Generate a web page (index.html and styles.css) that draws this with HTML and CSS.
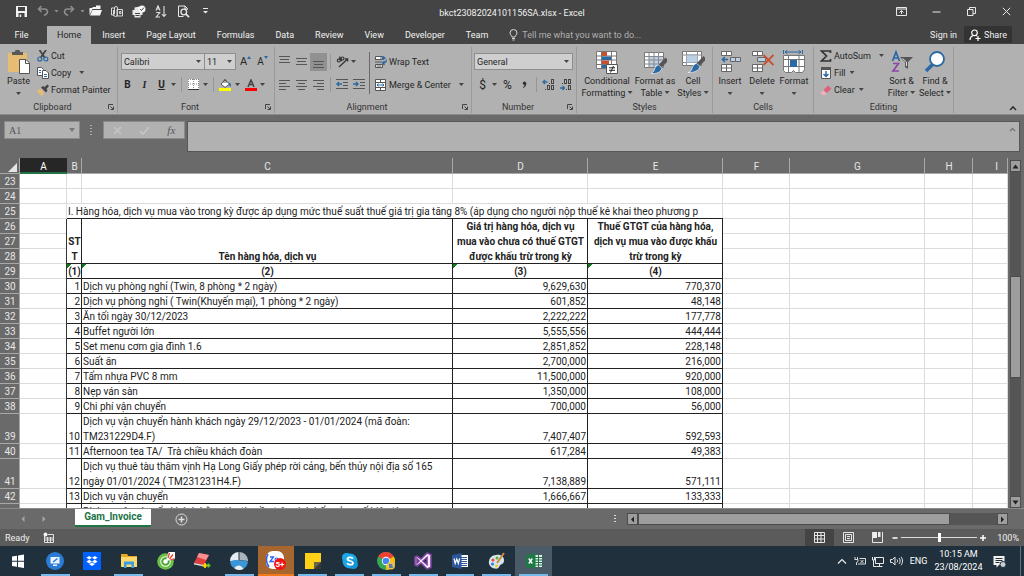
FILE: index.html
```html
<!DOCTYPE html>
<html lang="vi">
<head>
<meta charset="utf-8">
<title>bkct23082024101156SA.xlsx - Excel</title>
<link rel="stylesheet" href="styles.css">
</head>
<body>
<div class="app">

<header class="titlebar">
  <div class="quick">
    <button class="q q-save" aria-label="Save"><svg width="13" height="13" viewBox="0 0 13 13"><path fill="#f2f2f2" fill-rule="evenodd" d="M1 1h11v11H1zM3 2v4h7V2zM3.500 8v4h1.200V9.500h1.500V12h3.300V8z"/></svg></button>
    <button class="q" aria-label="Undo"><svg width="12" height="12" viewBox="0 0 12 12" fill="none" stroke="#8c8c8c" stroke-width="1.600"><path d="M4.500 1L1.500 4l3 3M1.500 4H7.500c2 0 3 1.200 3 2.800S9.500 9.500 7 10.500"/></svg></button>
    <span class="caret dim"></span>
    <button class="q" aria-label="Redo"><svg width="12" height="12" viewBox="0 0 12 12" fill="none" stroke="#8c8c8c" stroke-width="1.600"><path d="M7.500 1l3 3-3 3M10.500 4H4.500c-2 0-3 1.200-3 2.800S2.500 9.500 5 10.500"/></svg></button>
    <span class="caret dim"></span>
    <button class="q" aria-label="Open"><svg width="13" height="12" viewBox="0 0 13 12"><path fill="#f5f5f5" d="M0.500 10V3H3l1-1h3V0.500h4.500V4H3.500zM1 10.500l2.500-5.500H13l-2 5.500z"/></svg></button>
    <button class="q" aria-label="Attach"><svg width="14" height="13" viewBox="0 0 14 13" fill="none" stroke="#d8d8d8"><path d="M4 3H1.500v7h3M7 4.500h5.500V11H7z"/><path d="M3.500 5v4.500a2 2 0 0 0 4 0V3a1.500 1.500 0 0 0-3 0v6M9.500 6.500h1.500v2H9.500z"/></svg></button>
    <button class="q" aria-label="Quick Print"><svg width="14" height="13" viewBox="0 0 14 13"><path fill="#e8e8e8" d="M0.500 5h2V2.500l5-1V5h3v5h-2v2.500h-6V10h-2z"/><circle cx="10" cy="4" r="3.500" fill="#f8f8f8"/><path d="M8.200 4l1.300 1.500L12 2.500M3 8.500h5M3.500 10.500h4" stroke="#444" fill="none"/></svg></button>
    <button class="q" aria-label="Sort"><svg width="12" height="13" viewBox="0 0 12 13" fill="none" stroke="#e0e0e0"><path d="M1 5.500L3 .8l2 4.700M1.500 4h3M1.200 7.500h3.600L1.200 12h3.800M9 1v10.500M6.800 9L9 11.500 11.200 9" stroke-width="1.100"/></svg></button>
    <button class="q" aria-label="Print Preview"><svg width="13" height="13" viewBox="0 0 13 13" fill="none" stroke="#e8e8e8"><path d="M10.500 4.500V3.500L8 1H1.500v10.500h5M8 1v3h2.500"/><circle cx="6.800" cy="7" r="2.800" stroke-width="1.300"/><path d="M9 9.200l3 3" stroke-width="1.700"/></svg></button>
    <button class="q" aria-label="Customize"><svg width="7" height="8" viewBox="0 0 7 8"><path fill="#e8e8e8" d="M1 1h5v1H1zM1 4h5L3.500 6.500z"/></svg></button>
  </div>
  <h1 class="doc-title">bkct23082024101156SA.xlsx - Excel</h1>
  <div class="winbtns">
    <button aria-label="Ribbon Display Options"><svg width="11" height="9" viewBox="0 0 11 9" fill="none" stroke="#e8e8e8"><path d="M.5.500h10v8H.5zM.5 2h10" /><path d="M5.500 7V4M3.500 5.500l2-2 2 2"/></svg></button>
    <button aria-label="Minimize"><svg width="9" height="9" viewBox="0 0 9 9"><path d="M.5 5h8" stroke="#e8e8e8"/></svg></button>
    <button aria-label="Restore"><svg width="9" height="9" viewBox="0 0 9 9" fill="none" stroke="#e8e8e8"><path d="M.5 2.500h5.500v6H.5zM2.500 2.500v-2h6v6H6"/></svg></button>
    <button aria-label="Close"><svg width="9" height="9" viewBox="0 0 9 9"><path d="M.8.800l7.400 7.400M8.200.800L.8 8.200" stroke="#e8e8e8"/></svg></button>
  </div>
</header>

<nav class="tabs">
  <button class="tab file">File</button>
  <button class="tab active">Home</button>
  <button class="tab">Insert</button>
  <button class="tab">Page Layout</button>
  <button class="tab">Formulas</button>
  <button class="tab">Data</button>
  <button class="tab">Review</button>
  <button class="tab">View</button>
  <button class="tab">Developer</button>
  <button class="tab">Team</button>
  <button class="tellme"><svg width="9" height="12" viewBox="0 0 9 12" fill="none" stroke="#d8d8d8"><path d="M3 8C3 6.500 1 6 1 4a3.500 3.500 0 0 1 7 0c0 2-2 2.500-2 4zM3 9.500h3M3.500 11h2"/></svg>Tell me what you want to do...</button>
  <button class="signin">Sign in</button>
  <button class="share"><svg width="12" height="12" viewBox="0 0 12 12" fill="none" stroke="#fff" stroke-width="1.200"><circle cx="5.500" cy="3.800" r="2.800"/><path d="M1 11c0-2.500 1.300-3.800 3-4.500M7 6.500l1 .5M9 7v5M6.500 9.500h5"/></svg>Share</button>
</nav>

<section class="ribbon">
  <div class="group g-clip">
    <div class="body">
      <button class="big paste"><svg width="24" height="24" viewBox="0 0 24 24"><path fill="#e6bd72" d="M1 3h19v19H1z"/><path fill="#595959" d="M5 5V2h3a2.500 2.500 0 0 1 5 0h3v3z"/><path d="M12.500 9.500h6.500l3.500 3.500v10.500h-10z" fill="#fff" stroke="#555"/><path d="M18.500 9.500v4h4" fill="none" stroke="#555"/></svg><span>Paste</span><i class="caret"></i></button>
      <div class="stack">
        <button class="small"><svg width="12" height="12" viewBox="0 0 12 12" fill="none"><path d="M2.500 0L8 8M9 0L3.500 8" stroke="#444" stroke-width="1.800"/><circle cx="2.800" cy="9" r="2" stroke="#2b69a5" stroke-width="1.200"/><circle cx="8.800" cy="9" r="2" stroke="#2b69a5" stroke-width="1.200"/></svg>Cut</button>
        <button class="small"><svg width="12" height="12" viewBox="0 0 12 12"><path d="M.5.500h4l2 2v6h-6z" fill="#fff" stroke="#555"/><path d="M5.500 3.500h3.500l2.500 2.500v5.500h-6z" fill="#fff" stroke="#555"/><path d="M2 3.500h2M2 5.500h2M7 7.500h3M7 9.500h3" stroke="#2b69a5"/></svg>Copy<i class="caret wide"></i></button>
        <button class="small"><svg width="12" height="12" viewBox="0 0 12 12"><path fill="#e6bd72" d="M0 6l4-1 3 4-2 3C3 11 1 9 0 6z"/><path d="M4 3.500l5 5 1.500-2-1-1.500L12 2 10.500.500 7.500 3 6 2z" fill="#444"/></svg>Format Painter</button>
      </div>
    </div>
    <footer>Clipboard<svg class="launch" width="6" height="6" viewBox="0 0 6 6"><path d="M.5 5V.500H5M2.500 2.500L5 5M5.500 2.500v3h-3" fill="none" stroke="#444"/></svg></footer>
  </div>

  <div class="group g-font">
    <div class="body rows">
      <div class="line">
        <label class="combo c-font"><select aria-label="Font"><option>Calibri</option></select></label>
        <label class="combo c-size"><select aria-label="Font size"><option>11</option></select></label>
        <button class="t grow" aria-label="Increase font size">A<svg width="4" height="3" viewBox="0 0 4 3"><path d="M0 3L2 0l2 3z" fill="#2b69a5"/></svg></button>
        <button class="t shrink" aria-label="Decrease font size">A<svg width="4" height="3" viewBox="0 0 4 3"><path d="M0 0h4L2 3z" fill="#2b69a5"/></svg></button>
      </div>
      <div class="line fontline">
        <button class="t w17"><b>B</b></button><button class="t w17"><b><em>I</em></b></button><button class="t w17"><b><u>U</u></b></button><i class="caret"></i>
        <i class="vsep"></i>
        <button class="t w17" aria-label="Borders"><svg width="11" height="11" viewBox="0 0 11 11"><path fill="#fff" d="M0 0h11v10H0z"/><path d="M.5 0v10M5.500 0v10M10.500 0v10M0 .5h11M0 5h11" stroke="#888" stroke-dasharray="1 1"/><path d="M0 10.500h11" stroke="#333"/></svg></button><i class="caret"></i>
        <i class="vsep"></i>
        <button class="t w17" aria-label="Fill colour"><svg width="13" height="12" viewBox="0 0 13 12"><path d="M2 5l4-4 4.500 4L6 8.500z" fill="#fff" stroke="#555"/><path d="M5 4V1.500a1 1 0 0 1 2 0V4" fill="none" stroke="#555"/><path d="M10 3.500c2 .5 2.500 2.500 1.500 4.500L10 6z" fill="#2b69a5"/><path fill="#ff0" d="M0 9h12v3H0z"/></svg></button><i class="caret"></i>
        <button class="t w17" aria-label="Font colour"><svg width="12" height="12" viewBox="0 0 12 12"><path d="M3 8l3-7 3 7M4 5.500h4" fill="none" stroke="#444" stroke-width="1.500"/><path fill="#f00" d="M0 9h12v3H0z"/></svg></button><i class="caret"></i>
      </div>
    </div>
    <footer>Font<svg class="launch" width="6" height="6" viewBox="0 0 6 6"><path d="M.5 5V.500H5M2.500 2.500L5 5M5.500 2.500v3h-3" fill="none" stroke="#444"/></svg></footer>
  </div>

  <div class="group g-align">
    <div class="body">
      <div class="rows pad">
        <div class="line">
          <button class="t w17" aria-label="Top"><svg width="11" height="14" viewBox="0 0 11 14"><path d="M0 1.500h11M1 4.500h9M0 7.500h11" stroke="#555"/></svg></button><button class="t w17" aria-label="Middle"><svg width="11" height="14" viewBox="0 0 11 14"><path d="M0 3.500h11M1 6.500h9M0 9.500h11" stroke="#555"/></svg></button><button class="t w17 on" aria-label="Bottom"><svg width="11" height="14" viewBox="0 0 11 14"><path d="M0 6.500h11M1 9.500h9M0 12.500h11" stroke="#555"/></svg></button>
          <i class="vsep"></i>
          <button class="t w17" aria-label="Orientation"><svg width="13" height="13" viewBox="0 0 13 13" fill="none" stroke="#333" stroke-width="1.200"><path d="M3 12L11.500 4M9 3.800h2.700v2.700"/><circle cx="2.800" cy="5.500" r="1.500"/><path d="M3 3l3 3"/><circle cx="6.500" cy="3.500" r="1.500"/><path d="M3.500 1.500L5 4"/></svg></button><i class="caret"></i>
        </div>
        <div class="line">
          <button class="t w17" aria-label="Left"><svg width="11" height="11" viewBox="0 0 11 11"><path d="M0 1.500h11M0 4.500h7M0 7.500h11M0 10.500h7" stroke="#555"/></svg></button><button class="t w17" aria-label="Centre"><svg width="11" height="11" viewBox="0 0 11 11"><path d="M0 1.500h11M2 4.500h7M0 7.500h11M2 10.500h7" stroke="#555"/></svg></button><button class="t w17" aria-label="Right"><svg width="11" height="11" viewBox="0 0 11 11"><path d="M0 1.500h11M4 4.500h7M0 7.500h11M4 10.500h7" stroke="#555"/></svg></button>
          <i class="vsep"></i>
          <button class="t w17" aria-label="Decrease indent"><svg width="13" height="11" viewBox="0 0 13 11"><path d="M0 .5h12M7 3.500h5M7 6.500h5M0 9.500h12" stroke="#555"/><path d="M6 5H1M3 3L1 5l2 2" stroke="#2b69a5" stroke-width="1.400" fill="none"/></svg></button><button class="t w17" aria-label="Increase indent"><svg width="13" height="11" viewBox="0 0 13 11"><path d="M0 .5h12M7 3.500h5M7 6.500h5M0 9.500h12" stroke="#555"/><path d="M0 5h5M3 3l2 2-2 2" stroke="#2b69a5" stroke-width="1.400" fill="none"/></svg></button>
        </div>
      </div>
      <i class="vbar"></i>
      <div class="rows">
        <button class="line small"><svg width="12" height="12" viewBox="0 0 12 12"><path fill="#fff" stroke="#555" d="M.5.500h7v3h-7zM.5 8.500h7v3h-7z"/><path d="M0 3.500h7M0 6h7M1.500 10h5" stroke="#555"/><path d="M5 2h4M11 3.500c1 2-.5 3.500-3.500 3.500M9.500 5L7.500 7l2 2M8 .5L10 2 8 3.500" stroke="#2b69a5" fill="none" stroke-width="1.200"/></svg>Wrap Text</button>
        <button class="line small"><svg width="12" height="12" viewBox="0 0 12 12"><path fill="#fff" stroke="#555" d="M.5.500h10v11H.5z"/><path d="M.5 3.500h10M.5 8.500h10M5.500 0v3.500M5.500 8.500V12" stroke="#555"/><path d="M2 6h7M3.500 4.500L2 6l1.500 1.500M7.500 4.500L9 6 7.500 7.500" stroke="#2b69a5" fill="none"/></svg>Merge &amp; Center<i class="caret wide"></i></button>
      </div>
    </div>
    <footer>Alignment<svg class="launch" width="6" height="6" viewBox="0 0 6 6"><path d="M.5 5V.500H5M2.500 2.500L5 5M5.500 2.500v3h-3" fill="none" stroke="#444"/></svg></footer>
  </div>

  <div class="group g-num">
    <div class="body rows">
      <div class="line"><label class="combo c-num"><select aria-label="Number format"><option>General</option></select></label></div>
      <div class="line numline">
        <button class="t w17 sym">$</button><i class="caret"></i><button class="t w17 sym">%</button><button class="t w17" aria-label="Comma style"><svg width="5" height="8" viewBox="0 0 5 8"><circle cx="2.500" cy="2.200" r="1.700" fill="#333"/><path d="M4.200 2c.2 2-.7 4-2.700 5l-.5-.8c1-.7 1.500-1.500 1.500-3z" fill="#333"/></svg></button>
        <i class="vsep"></i>
        <button class="t w17" aria-label="Increase decimal"><svg width="13" height="12" viewBox="0 0 13 12"><path d="M5.500 3H1M3 1L1 3l2 2" stroke="#2b69a5" fill="none" stroke-width="1.300"/><path d="M7 4.500h1" stroke="#444"/><g fill="none" stroke="#444"><rect x="9.500" y=".5" width="2" height="4"/><rect x="5.500" y="6.500" width="2" height="4"/><rect x="9.500" y="6.500" width="2" height="4"/><path d="M3 10.500h1"/></g></svg></button><button class="t w17" aria-label="Decrease decimal"><svg width="13" height="12" viewBox="0 0 13 12"><path d="M1 9h4.500M3.500 7l2 2-2 2" stroke="#2b69a5" fill="none" stroke-width="1.300"/><g fill="none" stroke="#444"><rect x="5.500" y=".5" width="2" height="4"/><rect x="9.500" y=".5" width="2" height="4"/><rect x="9.500" y="6.500" width="2" height="4"/><path d="M3 4.500h1M7 10.500h1"/></g></svg></button>
      </div>
    </div>
    <footer>Number<svg class="launch" width="6" height="6" viewBox="0 0 6 6"><path d="M.5 5V.500H5M2.500 2.500L5 5M5.500 2.500v3h-3" fill="none" stroke="#444"/></svg></footer>
  </div>

  <div class="group g-styles">
    <div class="body">
      <button class="big b-cond"><svg width="24" height="24" viewBox="0 0 24 24"><path fill="#fff" stroke="#777" d="M1.500 1.500h20v17h-20z"/><path d="M1 6h20M1 10h20M1 14.500h20M6.500 1v17M16.500 1v17" stroke="#777"/><path fill="#c8502f" d="M7 2h5v4H7zM7 10.500h7V14H7z"/><path fill="#2b69a5" d="M7 6.500h9V10H7zM7 15h5v3H7z"/><path fill="#fff" stroke="#555" d="M11.500 14.500h11v9h-11z"/><path d="M14 17.800h6M14 20.300h6M18.500 16l-3 6.500" stroke="#222"/></svg><span>Conditional<br>Formatting <i class="caret"></i></span></button>
      <button class="big b-table"><svg width="24" height="24" viewBox="0 0 24 24"><path fill="#fff" stroke="#777" d="M1.500 2.500h19v15h-19z"/><path fill="#bdd0e6" d="M6 6.500h14V17H6z"/><path d="M1 6.500h19M1 10h19M1 14h19M6 2v16M11 2v16M15.500 2v16" stroke="#888"/><path fill="#555" d="M22.500 7.500L24 9v3l-6 6-3-2.500z"/><path fill="#2b69a5" stroke="#fff" stroke-width=".6" d="M15.500 15l3.500 3c-1 4-5 6-11 5.500 2-1 3-2 3.500-4s2-4.500 4-4.500z"/></svg><span>Format as<br>Table <i class="caret"></i></span></button>
      <button class="big b-cell"><svg width="24" height="24" viewBox="0 0 24 24"><path fill="#fff" stroke="#777" d="M1.500 1.500h19v14h-19z"/><path d="M1 5h19M1 12.500h19M5.500 1v15M16.500 1v15" stroke="#888"/><path fill="#bdd0e6" stroke="#9ab" d="M5.500 5h11v7.500h-11z"/><path fill="#555" d="M22.500 6L24 7.500v3l-6 6-3-2.500z"/><path fill="#2b69a5" stroke="#fff" stroke-width=".6" d="M15.500 13.500l3.500 3c-1 4-6 6.500-12 6 3-1 3.500-2 4-4s2.500-5 4.500-5z"/></svg><span>Cell<br>Styles <i class="caret"></i></span></button>
    </div>
    <footer>Styles</footer>
  </div>

  <div class="group g-cells">
    <div class="body">
      <button class="big w32"><svg width="24" height="24" viewBox="0 0 24 24" fill="#fff" stroke="#666"><path d="M3.500 1.500h10v4h-10zM8.500 1.500v4M3.500 14.500h10v7h-10zM8.500 14.500v7M3.500 18h10"/><path d="M12.500 7.500h10v4h-10zM17.500 7.500v4" fill="#bdd0e6"/><path d="M10 9.500H4.500M6.800 7L4.300 9.500l2.500 2.500" stroke="#2b69a5" stroke-width="1.500" fill="none"/></svg><span>Insert</span><i class="caret"></i></button>
      <button class="big w32"><svg width="24" height="24" viewBox="0 0 24 24" fill="#fff" stroke="#666"><path d="M2.500 1.500h10v4h-10zM7.500 1.500v4M2.500 14.500h10v7h-10zM7.500 14.500v7M2.500 18h10"/><path d="M7.500 7.500h8v4h-8z" fill="#bdd0e6"/><path d="M13.500 5l10 10M23.500 5l-10 10" stroke="#c8502f" stroke-width="1.800"/></svg><span>Delete</span><i class="caret"></i></button>
      <button class="big w32"><svg width="24" height="24" viewBox="0 0 24 24" fill="#fff" stroke="#777"><path d="M1.500 5.500h21v14l-2 3h-7l-2-2-2 2h-6l-2-2z"/><path d="M1 9.500h21M1 16.500h21M6.500 5v17M17 5v17"/><path fill="#2b69a5" stroke="none" d="M8 10h7v7H8z"/><path d="M3 2h16M5.500 0l-2.500 2 2.500 2M16.500 0L19 2l-2.500 2M1.500 0v4M20.500 0v4" stroke="#2b69a5" fill="none"/></svg><span>Format</span><i class="caret"></i></button>
    </div>
    <footer>Cells</footer>
  </div>

  <div class="group g-edit">
    <div class="body">
      <div class="stack">
        <button class="small"><svg width="12" height="12" viewBox="0 0 12 12"><path d="M10.500 3V1H1.500l5 5-5 5h9V9" fill="none" stroke="#333" stroke-width="1.700"/></svg>AutoSum<i class="caret wide"></i></button>
        <button class="small"><svg width="12" height="12" viewBox="0 0 12 12"><path fill="#fff" stroke="#555" d="M1.500 1h9v10.500h-9z"/><path fill="#555" d="M1 0h10v3H1z"/><path d="M6 4v5M3.500 7L6 9.500 8.500 7" fill="none" stroke="#2b69a5" stroke-width="1.500"/></svg>Fill<i class="caret"></i></button>
        <button class="small"><svg width="12" height="12" viewBox="0 0 12 12"><path fill="#e0607a" d="M3.500 6L8 1.500l3.500 3L7 9z"/><path fill="#f0b0bc" d="M3 6.500L6.500 9.500 5 11H2.500L.5 9z"/></svg>Clear<i class="caret"></i></button>
      </div>
      <button class="big b-sort"><svg width="24" height="24" viewBox="0 0 24 24" fill="none"><path d="M2.500 11L6 2l3.500 9M3.500 8h5" stroke="#2b69a5" stroke-width="1.700"/><path d="M3 13.500h5.500L3 21h6" stroke="#8a48a8" stroke-width="1.700"/><path fill="#555" d="M10 7h13l-5 5v7l-3-2v-5z"/><path d="M12.500 8.500l4 3.500v4" stroke="#ddd"/></svg><span>Sort &amp;<br>Filter <i class="caret"></i></span></button>
      <button class="big b-find"><svg width="24" height="24" viewBox="0 0 24 24"><path d="M10.500 13.500L3 21" stroke="#2b69a5" stroke-width="3.500"/><circle cx="14" cy="9" r="7" fill="#fff" stroke="#2b69a5" stroke-width="1.800"/></svg><span>Find &amp;<br>Select <i class="caret"></i></span></button>
    </div>
    <footer>Editing</footer>
  </div>
  <button class="collapse" aria-label="Collapse the Ribbon"><svg width="8" height="6" viewBox="0 0 8 6"><path d="M1 5l3-3 3 3" fill="none" stroke="#333" stroke-width="1.600"/></svg></button>
</section>

<section class="formula">
  <label class="namebox"><input value="A1" aria-label="Name Box"></label>
  <svg class="dots" width="2" height="10" viewBox="0 0 2 10"><path d="M1 0v10" stroke="#eee" stroke-width="1" stroke-dasharray="1 2"/></svg>
  <div class="fx">
    <button aria-label="Cancel"><svg width="9" height="9" viewBox="0 0 9 9"><path d="M1 1l7 7M8 1L1 8" stroke="#c6c6c6" stroke-width="1.400"/></svg></button>
    <button aria-label="Enter"><svg width="11" height="9" viewBox="0 0 11 9"><path d="M1 5l3 3 6-7" fill="none" stroke="#c6c6c6" stroke-width="1.600"/></svg></button>
    <button class="fxb"><em>fx</em></button>
  </div>
  <div class="fbar"><textarea aria-label="Formula Bar"></textarea><svg width="7" height="5" viewBox="0 0 7 5"><path d="M1 4l2.500-2.500L6 4" fill="none" stroke="#777" stroke-width="1.300"/></svg></div>
</section>

<main class="work">
  <div class="gridwrap">
  <table class="sheet">
    <colgroup><col class="k-h"><col class="k-a"><col class="k-b"><col class="k-c"><col class="k-d"><col class="k-d"><col class="k-f"><col class="k-d"><col class="k-hh"><col></colgroup>
    <thead><tr><th class="corner"><svg width="9" height="9" viewBox="0 0 9 9"><path d="M9 0v9H0z" fill="#e6e6e6"/></svg></th><th class="cur">A</th><th>B</th><th>C</th><th>D</th><th>E</th><th>F</th><th>G</th><th>H</th><th class="last">I</th></tr></thead>
    <tbody>
      <tr><th>23</th><td></td><td></td><td></td><td></td><td></td><td></td><td></td><td></td><td></td></tr>
      <tr><th>24</th><td></td><td></td><td></td><td></td><td></td><td></td><td></td><td></td><td></td></tr>
      <tr><th>25</th><td></td><td colspan="4" class="intro">I. Hàng hóa, dịch vụ mua vào trong kỳ được áp dụng mức thuế suất thuế giá trị gia tăng 8% (áp dụng cho người nộp thuế kê khai theo phương p</td><td></td><td></td><td></td><td></td></tr>
    </tbody>
    <tbody class="inv">
      <tr><th>26</th><td></td><td rowspan="3" class="hd">ST<br>T</td><td rowspan="3" class="hd">Tên hàng hóa, dịch vụ</td><td rowspan="3" class="hd">Giá trị hàng hóa, dịch vụ<br>mua vào chưa có thuế GTGT<br>được khấu trừ trong kỳ</td><td rowspan="3" class="hd">Thuế GTGT của hàng hóa,<br>dịch vụ mua vào được khấu<br>trừ trong kỳ</td><td></td><td></td><td></td><td></td></tr>
      <tr><th>27</th><td></td><td></td><td></td><td></td><td></td></tr>
      <tr><th>28</th><td></td><td></td><td></td><td></td><td></td></tr>
      <tr><th>29</th><td></td><td class="hd flag">(1)</td><td class="hd flag">(2)</td><td class="hd flag">(3)</td><td class="hd flag">(4)</td><td></td><td></td><td></td><td></td></tr>
      <tr><th>30</th><td></td><td class="n">1</td><td class="s">Dịch vụ phòng nghỉ (Twin, 8 phòng * 2 ngày)</td><td class="n">9,629,630</td><td class="n">770,370</td><td></td><td></td><td></td><td></td></tr>
      <tr><th>31</th><td></td><td class="n">2</td><td class="s">Dịch vụ phòng nghỉ ( Twin(Khuyến mại), 1 phòng * 2 ngày)</td><td class="n">601,852</td><td class="n">48,148</td><td></td><td></td><td></td><td></td></tr>
      <tr><th>32</th><td></td><td class="n">3</td><td class="s">Ăn tối ngày 30/12/2023</td><td class="n">2,222,222</td><td class="n">177,778</td><td></td><td></td><td></td><td></td></tr>
      <tr><th>33</th><td></td><td class="n">4</td><td class="s">Buffet người lớn</td><td class="n">5,555,556</td><td class="n">444,444</td><td></td><td></td><td></td><td></td></tr>
      <tr><th>34</th><td></td><td class="n">5</td><td class="s">Set menu cơm gia đình 1.6</td><td class="n">2,851,852</td><td class="n">228,148</td><td></td><td></td><td></td><td></td></tr>
      <tr><th>35</th><td></td><td class="n">6</td><td class="s">Suất ăn</td><td class="n">2,700,000</td><td class="n">216,000</td><td></td><td></td><td></td><td></td></tr>
      <tr><th>36</th><td></td><td class="n">7</td><td class="s">Tấm nhựa PVC 8 mm</td><td class="n">11,500,000</td><td class="n">920,000</td><td></td><td></td><td></td><td></td></tr>
      <tr><th>37</th><td></td><td class="n">8</td><td class="s">Nẹp ván sàn</td><td class="n">1,350,000</td><td class="n">108,000</td><td></td><td></td><td></td><td></td></tr>
      <tr><th>38</th><td></td><td class="n">9</td><td class="s">Chi phí vận chuyển</td><td class="n">700,000</td><td class="n">56,000</td><td></td><td></td><td></td><td></td></tr>
      <tr><th>39</th><td></td><td class="n">10</td><td class="s">Dịch vụ vận chuyển hành khách ngày 29/12/2023 - 01/01/2024 (mã đoàn:<br>TM231229D4.F)</td><td class="n">7,407,407</td><td class="n">592,593</td><td></td><td></td><td></td><td></td></tr>
      <tr><th>40</th><td></td><td class="n">11</td><td class="s">Afternoon tea TA/&nbsp; Trà chiều khách đoàn</td><td class="n">617,284</td><td class="n">49,383</td><td></td><td></td><td></td><td></td></tr>
      <tr><th>41</th><td></td><td class="n">12</td><td class="s">Dịch vụ thuê tàu thăm vịnh Hạ Long Giấy phép rời cảng, bến thủy nội địa số 165<br>ngày 01/01/2024 ( TM231231H4.F)</td><td class="n">7,138,889</td><td class="n">571,111</td><td></td><td></td><td></td><td></td></tr>
      <tr><th>42</th><td></td><td class="n">13</td><td class="s">Dịch vụ vận chuyển</td><td class="n">1,666,667</td><td class="n">133,333</td><td></td><td></td><td></td><td></td></tr>
      <tr><th></th><td></td><td class="n"></td><td class="s">Dịch vụ vận chuyển khách bằng tàu thuyền trên vịnh bến cảng số hiệu tàu</td><td class="n"></td><td class="n"></td><td></td><td></td><td></td><td></td></tr>
    </tbody>
  </table>
  </div>
  <div class="vscroll">
    <button aria-label="Scroll up"><svg width="7" height="5" viewBox="0 0 7 5"><path d="M.5 4.500h6l-3-4z" fill="#222"/></svg></button>
    <div class="vtrack"><div class="vthumb"></div></div>
    <button aria-label="Scroll down"><svg width="7" height="5" viewBox="0 0 7 5"><path d="M.5.500h6l-3 4z" fill="#222"/></svg></button>
  </div>
</main>

<section class="sheetbar">
  <button class="nav" aria-label="Previous sheet"><svg width="4" height="6" viewBox="0 0 4 6"><path d="M3.500 0v6L.5 3z" fill="#a6a6a6"/></svg></button>
  <button class="nav" aria-label="Next sheet"><svg width="4" height="6" viewBox="0 0 4 6"><path d="M.5 0v6l3-3z" fill="#a6a6a6"/></svg></button>
  <button class="sheettab">Gam_Invoice</button>
  <button class="add" aria-label="New sheet"><svg width="13" height="13" viewBox="0 0 13 13" fill="none" stroke="#e0e0e0"><circle cx="6.500" cy="6.500" r="5.500"/><path d="M6.500 3.500v6M3.500 6.500h6" stroke-width="1.500"/></svg></button>
  <svg class="grip" width="2" height="8" viewBox="0 0 2 8"><path d="M1 0v8" stroke="#ddd" stroke-width="2" stroke-dasharray="1 2"/></svg>
  <div class="hscroll">
    <button aria-label="Scroll left"><svg width="5" height="7" viewBox="0 0 5 7"><path d="M4 .5v6l-3-3z" fill="#222"/></svg></button>
    <div class="htrack"><div class="hthumb"></div></div>
    <button aria-label="Scroll right"><svg width="5" height="7" viewBox="0 0 5 7"><path d="M1 .5v6l3-3z" fill="#222"/></svg></button>
  </div>
</section>

<section class="status">
  <span class="ready">Ready</span>
  <svg width="11" height="11" viewBox="0 0 11 11"><path d="M1.500 4v6.500h9v-8H5M2 6h8M2 8h8M4.500 5v5M7.500 5v5" fill="none" stroke="#e0e0e0"/><circle cx="2.500" cy="2.500" r="2" fill="#f5f5f5"/></svg>
  <div class="views">
    <button class="sel" aria-label="Normal"><svg width="11" height="11" viewBox="0 0 11 11"><path d="M.5.500h10v10H.5zM.5 3.500h10M.5 7h10M3.500.500v10M7 .5v10" fill="none" stroke="#e6e6e6"/></svg></button>
    <button aria-label="Page Layout"><svg width="11" height="11" viewBox="0 0 11 11"><path d="M.5.500h10v10H.5zM2.500 2.500h6v6h-6zM4 4.500h3M4 6.500h3" fill="none" stroke="#e6e6e6"/></svg></button>
    <button aria-label="Page Break Preview"><svg width="11" height="11" viewBox="0 0 11 11"><path d="M.5 0v10.500h10V0" fill="none" stroke="#e6e6e6"/><path d="M1 0h4v6H1zM6 0h2.500v5H6z" fill="#f0f0f0"/></svg></button>
  </div>
  <div class="zoom"><button aria-label="Zoom out"><svg width="6" height="6" viewBox="0 0 6 6"><path d="M.5 3h5" stroke="#fff" stroke-width="1.500"/></svg></button><input type="range" min="10" max="190" value="100" aria-label="Zoom"><button aria-label="Zoom in"><svg width="6" height="6" viewBox="0 0 6 6"><path d="M0 3h6M3 0v6" stroke="#fff" stroke-width="1.500"/></svg></button></div>
  <span class="pct">100%</span>
</section>

<footer class="taskbar">
  <div class="pins">
    <button aria-label="Start"><svg width="18" height="18" viewBox="0 0 18 18"><path fill="#fff" d="M3 4.500l5-.8v5H3zM9 3.500l6-1v6.200H9zM3 9.700h5v5L3 14zM9 9.700h6V16l-6-1z"/></svg></button>
    <button class="run" aria-label="Remote Desktop"><svg width="18" height="18" viewBox="0 0 18 18"><circle cx="9" cy="9" r="9" fill="#2a7bd6"/><path fill="#eaf4ff" d="M4.500 5h9v6.500h-9zM7 12.500h4V14H7z"/><path d="M7 10l4.500-3.500" stroke="#2a7bd6" stroke-width="1.500"/></svg></button>
    <button aria-label="Dropbox"><svg width="18" height="18" viewBox="0 0 18 18"><path fill="#0061ff" d="M0 0h18v18H0z"/><path fill="#fff" d="M6.200 4L9 5.800 6.200 7.600 3.400 5.800zM11.800 4l2.800 1.800-2.800 1.800L9 5.800zM6.200 7.800L9 9.600l-2.800 1.800-2.800-1.800zM11.800 7.800l2.800 1.800-2.800 1.800L9 9.600zM9 10.500l2.800 1.700L9 14l-2.800-1.800z"/></svg></button>
    <button class="run" aria-label="File Explorer"><svg width="18" height="18" viewBox="0 0 18 18"><path fill="#e8a824" d="M1 2h6l1.500 2H17v4H1z"/><path fill="#fcd870" d="M1 5h16v10H1z"/><path fill="#3d9be0" d="M4 9.500h10V16h-2.500v-3.500h-5V16H4z"/></svg></button>
    <button aria-label="Coc Coc"><svg width="18" height="18" viewBox="0 0 18 18"><circle cx="8.500" cy="9.500" r="8.300" fill="#6cc04a"/><circle cx="8.500" cy="9.500" r="5.200" fill="#fff"/><circle cx="8.500" cy="9.500" r="3.300" fill="none" stroke="#4ca535" stroke-width="2"/><path fill="#fff" d="M9 9l2.500-9H18v7z"/><path d="M11 6l1.500-5M12.500 7l3.500-4.500M13.500 8l4-1.500" stroke="#e8452e" stroke-width="1.300"/></svg></button>
    <button aria-label="Note editor"><svg width="18" height="18" viewBox="0 0 18 18"><path fill="#e23c3c" d="M6 1l10 2-5 10L1 11z"/><path fill="#f49090" d="M6 1l10 2-3 5-9-3z"/><path fill="#ddd" d="M1 11l10 2v1.500L1 12.500z"/><path d="M9.500 13.500h5M12 11v5" stroke="#ffd400" stroke-width="1.800"/><path d="M13.500 13.500h4M15.500 11.500v4" stroke="#6ad12a" stroke-width="1.600"/></svg></button>
    <button class="run" aria-label="Disk usage"><svg width="18" height="18" viewBox="0 0 18 18"><path fill="#e4ebf2" d="M8.500 9H0a9 9 0 0 1 8.500-9z"/><path fill="#a9b4bd" d="M9.500 0A8.500 8.500 0 0 1 18 9L9.500 8z"/><path fill="#3a96d8" d="M0 9.500c6-3 12-1 18 0C17.500 14 15 16 13.500 17 12 14 9 12.500 4 16 2 15 .5 13 0 9.500z"/><path fill="#e8eef4" d="M4 16c4-4 7.500-3 9.500 1-3 1.500-7 1.500-9.500-1z"/></svg></button>
    <button class="alert" aria-label="Zalo"><svg width="20" height="20" viewBox="0 0 20 20"><rect x="0" y="1" width="18" height="18" rx="7" fill="#fff"/><path d="M2 4c-2 4-2 9 1 13" fill="none" stroke="#2962ff" stroke-width="1.500"/><path d="M4 7h3.500L4 11.500h4" fill="none" stroke="#2962ff" stroke-width="1.300"/><circle cx="10.500" cy="9.500" r="1.500" fill="none" stroke="#2962ff" stroke-width="1.200"/><circle cx="14" cy="14" r="6" fill="#f01414"/><text x="14" y="17" text-anchor="middle" class="badge">5+</text></svg></button>
    <button class="run" aria-label="Sticky Notes"><svg width="18" height="18" viewBox="0 0 18 18"><path fill="#fcd116" d="M1 1h16v9h-7v7H1z"/><path fill="#3a3a34" d="M10 10h7v7h-7z"/><path fill="#6b6545" d="M10 10h7l-7 7z"/></svg></button>
    <button class="run" aria-label="Skype"><svg width="18" height="18" viewBox="0 0 18 18"><circle cx="9" cy="9" r="7.500" fill="#1ba7e8"/><circle cx="5.500" cy="5.500" r="4.500" fill="#1ba7e8"/><circle cx="12.500" cy="12.500" r="4.500" fill="#1595d6"/><path d="M12 6.500C11 4.800 6.500 4.800 6.500 7c0 2.500 5.500 1.500 5.500 4 0 2.200-4.500 2.300-6 .3" fill="none" stroke="#fff" stroke-width="1.800"/></svg></button>
    <button class="run" aria-label="Chrome"><svg width="18" height="18" viewBox="0 0 18 18"><circle cx="9" cy="9" r="9" fill="#34a853"/><path fill="#ea4335" d="M1.200 4.500a9 9 0 0 1 15.600 0L9 9z"/><path fill="#fbbc05" d="M16.800 4.500A9 9 0 0 1 9 18l0-9z"/><circle cx="9" cy="9" r="4.200" fill="#fff"/><circle cx="9" cy="9" r="3.300" fill="#4285f4"/><circle cx="14" cy="13.500" r="4" fill="#e7bd57"/><path fill="#5b7f9b" d="M12 12h3l1 4h-4z"/></svg></button>
    <button class="run" aria-label="Visual Studio"><svg width="18" height="18" viewBox="0 0 18 18"><path fill="#f4ecf8" stroke="#7b3f9c" stroke-width="1.600" fill-rule="evenodd" d="M1 5l2-1 4 3 6-6 4 1.500v13L13 17l-6-6-4 3-2-1zM3 7v4l2-2zM13 5.500L9 9l4 3.500z"/></svg></button>
    <button class="run" aria-label="Word"><svg width="18" height="18" viewBox="0 0 18 18"><path fill="#fff" d="M9 3h8v12H9z"/><path d="M10 5.500h6M10 7.500h6M10 9.500h6M10 11.500h6M10 13.500h6" stroke="#2b579a"/><path fill="#2b579a" d="M1 3l9.500-2v16L1 15z"/><path d="M3 6.500l1.200 5L5.800 7l1.500 4.500 1.300-5" fill="none" stroke="#fff" stroke-width="1.200"/></svg></button>
    <button class="run" aria-label="Paint"><svg width="18" height="18" viewBox="0 0 18 18"><path fill="#d5e4f0" d="M8 3c5-1 8.500 2 8 6s-4 3-4.500 5-2 3-5 2.500S0 13 1 9s3-5.500 7-6z"/><circle cx="5" cy="8" r="1.500" fill="#e8452e"/><circle cx="9" cy="6" r="1.500" fill="#5ab031"/><circle cx="4.500" cy="12" r="1.500" fill="#2a7bd6"/><circle cx="8.500" cy="14" r="1.400" fill="#f5c518"/><path d="M16 1L9 11" stroke="#d08a3c" stroke-width="2"/></svg></button>
    <button class="run focus" aria-label="Excel"><svg width="18" height="18" viewBox="0 0 18 18"><path fill="#dff0e6" d="M9 3h8v12H9z"/><path d="M13.500 3v12M10 5.500h7M10 8h7M10 10.500h7M10 13h7" stroke="#217346"/><path fill="#1d7a45" d="M1 3l9.500-2v16L1 15z"/><path d="M3.800 6.500l3.500 5M7.300 6.500l-3.500 5" stroke="#fff" stroke-width="1.400"/></svg></button>
  </div>
  <div class="tray">
    <button aria-label="Show hidden icons"><svg width="10" height="7" viewBox="0 0 10 7"><path d="M1 5.500l4-4 4 4" fill="none" stroke="#eee" stroke-width="1.200"/></svg></button>
    <button aria-label="Battery"><svg width="12" height="10" viewBox="0 0 12 10" fill="none" stroke="#ddd"><path d="M1 1v2M3.500 1v2M.5 3.500h3.500v2l-1.500 1v2.500M5.500 2.500h6v5.500H4M6.500 4l3 3M9.500 4l-3 3"/></svg></button>
    <button aria-label="Network"><svg width="12" height="11" viewBox="0 0 12 11" fill="none" stroke="#e8e8e8"><path d="M3.500 1.500h8v6h-8zM7.500 7.500v2.500M4.500 10.500h6M.5 1v3h2V1M1.500 4v6.500h3"/></svg></button>
    <button aria-label="Volume"><svg width="13" height="10" viewBox="0 0 13 10" fill="none" stroke="#e8e8e8"><path d="M.5 3.500h2l2.500-2.500v8L2.500 6.500h-2zM7 3.500c.8 1 .8 2 0 3M9 2c1.500 2 1.500 4 0 6M11 .8c2 2.800 2 5.800 0 8.500"/></svg></button>
    <button class="lang">ENG</button>
    <div class="clock"><time>10:15 AM</time><time>23/08/2024</time></div>
    <button class="note" aria-label="Notifications"><svg width="13" height="13" viewBox="0 0 13 13"><path fill="#f2f2f2" d="M.5 1h11v9H6l-2.500 2.500V10h-3z"/><path d="M2.500 3.500h7M2.500 5.500h7M2.500 7.500h4" stroke="#20303c"/><circle cx="10" cy="9.500" r="3" fill="#c8d0d4" stroke="#20303c"/></svg></button>
    <i class="peek"></i>
  </div>
</footer>
</div>
</body>
</html>
```
FILE: styles.css
```css
* { box-sizing: border-box; }
html, body { height: 100%; margin: 0; }
body { font: 9px/12px Roboto, "Open Sans", sans-serif; color: #262626; background: #6a6a6a; overflow: hidden; }
button { font: inherit; color: inherit; background: none; border: 0; padding: 0; margin: 0; white-space: nowrap; }
svg { display: block; flex: none; }
input, select, textarea { font: inherit; color: inherit; border: 0; margin: 0; padding: 0; background: none; outline: 0; }
em { font-family: "Liberation Serif", serif; font-style: italic; }

.app { display: flex; flex-direction: column; height: 100vh; }
.caret { display: inline-block; flex: none; width: 5px; height: 3px; background: #444; clip-path: polygon(0 0, 100% 0, 50% 100%); }
.caret.dim { background: #8c8c8c; }

/* title bar */
.titlebar { display: grid; grid-template-columns: 1fr auto 1fr; align-items: center; height: 26px; flex: none; background: #444; color: #f0f0f0; }
.quick { display: flex; align-items: center; padding-left: 10px; height: 22px; align-self: start; }
.q { display: flex; justify-content: center; width: 22px; }
.quick .caret { margin-right: -1px; }
.doc-title { margin: 0; font-size: 9px; font-weight: 400; }
.winbtns { display: flex; justify-content: flex-end; align-self: start; height: 22px; }
.winbtns button { display: flex; align-items: center; justify-content: center; width: 35px; }

/* tabs */
.tabs { display: flex; height: 18px; flex: none; background: #444; color: #f2f2f2; padding-right: 12px; }
.tab { padding: 0 10px 0 11px; }
.tab.file { width: 47px; padding: 0; text-align: center; padding-right: 4px; }
.tab.active { background: #b1b1b1; color: #262626; padding: 0 10px; }
.tellme { display: flex; align-items: center; gap: 4px; padding-left: 11px; color: #b0b0b0; }
.signin { margin-left: auto; padding: 0 7px; }
.share { display: flex; align-items: center; gap: 3px; background: #333; padding: 0 5px; height: 17px; }

/* ribbon */
.ribbon { display: flex; flex: none; height: 71px; padding-top: 3px; background: #b1b1b1; border-bottom: 1px solid #8a8a8a; }
.group { display: flex; flex-direction: column; flex: none; height: 66px; border-right: 1px solid #9a9a9a; }
.group footer { position: relative; text-align: center; height: 12px; color: #333; }
.launch { position: absolute; right: 3px; top: 3px; }
.body { display: flex; height: 54px; }
.g-clip { width: 118px; }
.g-clip footer, .g-font footer, .g-align footer, .g-num footer { padding-right: 12px; }
.g-font { width: 157px; }
.g-align { width: 197px; }
.g-num { width: 105px; }
.g-styles { width: 136px; }
.g-cells { width: 101px; }
.g-edit { width: 140px; }
.big { display: flex; flex-direction: column; align-items: center; padding-top: 3px; gap: 1px; }
.big .caret { vertical-align: 2px; margin-top: 4px; }
.paste { width: 37px; }
.stack { display: flex; flex-direction: column; }
.stack .small { height: 17px; }
.small { display: flex; align-items: center; gap: 2px; }
.small .caret { margin-left: 2px; }
.small .caret.wide { margin-left: 6px; }
.rows { display: flex; flex-direction: column; padding-top: 3px; }
.line { display: flex; align-items: center; height: 23px; }
.g-font .line { padding-left: 3px; }
.g-font .fontline { padding-left: 1px; }
.fontline .caret, .numline .caret { margin: 0 2px 0 1px; }
.combo { position: relative; display: flex; height: 17px; background: #cfcfcf; border: 1px solid #8e8e8e; }
.combo::after { content: ""; position: absolute; right: 3px; top: 6px; width: 5px; height: 3px; background: #444; clip-path: polygon(0 0, 100% 0, 50% 100%); pointer-events: none; }
.combo select { appearance: none; width: 100%; padding-left: 2px; }
.c-font { width: 84px; }
.c-size { width: 32px; margin-left: -1px; }
.c-num { width: 99px; margin-left: 2px; }
.t { display: flex; align-items: center; justify-content: center; height: 18px; }
.w17 { width: 17px; }
.on { background: #919191; }
.grow { font-size: 11px; width: 17px; margin-left: 1px; }
.shrink { font-size: 10px; width: 17px; }
.grow svg, .shrink svg { align-self: flex-start; margin-top: 3px; }
.line b { font-size: 10px; }
.vsep { flex: none; width: 1px; height: 15px; background: #969696; margin: 0 3px; }
.vbar { flex: none; width: 1px; height: 42px; background: #6a6a6a; margin: 5px 5px 0 auto; }
.pad { padding-left: 1px; }
.g-align .body { padding: 0 8px 0 0; }
.g-align .small { width: 88px; }
.numline { padding-left: 2px; }
.sym { font-size: 12px; }
.b-cond { width: 58px; margin-left: 1px; } .b-table { width: 38px; } .b-cell { width: 38px; }
.w32 { width: 32px; }
.g-cells .body { padding-left: 1px; }
.g-edit .body { padding-left: 6px; }
.g-edit .stack { width: 64px; }
.b-sort { width: 35px; } .b-find { width: 32px; }
.collapse { margin-left: auto; padding: 0 7px 3px 0; align-self: flex-end; }

/* formula bar */
.formula { display: flex; align-items: flex-start; flex: none; height: 43px; padding: 6px 4px 0; background: #6a6a6a; }
.namebox { position: relative; width: 76px; height: 18px; background: #b1b1b1; border: 1px solid #8a8a8a; flex: none; }
.namebox input { width: 60px; height: 16px; padding-left: 4px; font: 10px "Liberation Serif", serif; color: #555; }
.namebox::after { content: ""; position: absolute; right: 4px; top: 6px; width: 6px; height: 4px; background: #777; clip-path: polygon(0 0, 100% 0, 50% 100%); }
.dots { margin: 4px 11px 0 10px; }
.fx { display: flex; align-items: center; justify-content: space-around; width: 82px; height: 18px; background: #b1b1b1; border: 1px solid #8a8a8a; color: #555; flex: none; }
.fxb { font-size: 11px; }
.fbar { display: flex; flex: 1; height: 31px; margin-left: 2px; padding: 5px 3px; background: #b1b1b1; border: 1px solid #565656; }
.fbar textarea { flex: 1; resize: none; height: 20px; }

/* grid */
.work { display: flex; flex: 1; min-height: 0; }
.gridwrap { flex: 1; min-width: 0; overflow: hidden; background: #fff; }
.sheet { width: 100%; table-layout: fixed; border-collapse: separate; border-spacing: 0; font: 10px/15px Roboto, "Open Sans", sans-serif; color: #222; }
.k-h { width: 20px; } .k-a { width: 47px; } .k-b { width: 15px; } .k-c { width: 371px; } .k-d { width: 135px; } .k-f { width: 67px; } .k-hh { width: 48px; }
.sheet th { padding: 0; background: #6a6a6a; color: #e6e6e6; font-weight: 400; text-align: center; vertical-align: bottom; box-shadow: inset -1px -1px #a8a8a8; }
.sheet thead th { height: 16px; line-height: 15px; padding-top: 1px; }
.sheet thead .cur { background: #262626; color: #fff; box-shadow: inset 0 -2px #217346; }
.sheet thead .last { padding-left: 12px; }
.corner svg { margin: 2px 0 2px 8px; }
.sheet td { height: 15px; padding: 0; vertical-align: bottom; box-shadow: inset -1px -1px #dcdcdc; white-space: nowrap; overflow: hidden; }
.sheet .intro { padding-left: 1px; box-shadow: inset 0 -1px #222, inset -1px 0 #dcdcdc; }
.inv td:nth-child(2) { box-shadow: inset -1px 0 #333, inset 0 -1px #dcdcdc; }
.inv .hd, .inv .n, .inv .s { box-shadow: inset -1px -1px #222; }
.hd { font-weight: 700; text-align: center; padding-right: 1px; }
.sheet .n { text-align: right; padding-right: 2px; }
.sheet .s { padding-left: 1px; }
.flag { background: linear-gradient(135deg, #0a7d1a 3px, transparent 3px); }
.vscroll { display: flex; flex-direction: column; flex: none; width: 16px; padding: 2px 3px 0 2px; background: #6a6a6a; }
.vscroll button, .hscroll button { display: flex; align-items: center; justify-content: center; width: 11px; height: 12px; background: #9d9d9d; border: 1px solid #4c4c4c; flex: none; }
.vtrack { flex: 1; background: #555; padding-top: 104px; }
.vthumb { height: 102px; background: #9d9d9d; border: 1px solid #4c4c4c; }

/* sheet tabs */
.sheetbar { display: flex; align-items: center; flex: none; height: 21px; background: #6a6a6a; border-top: 1px solid #8a8a8a; padding: 0 16px 0 12px; }
.nav { display: flex; justify-content: center; width: 21px; }
.sheettab { align-self: flex-start; width: 76px; height: 18px; margin-left: 21px; background: #fff; border-bottom: 2px solid #217346; color: #217346; font: 700 10px/16px Roboto, sans-serif; }
.add { margin-left: 24px; }
.grip { margin-left: auto; margin-right: 11px; }
.hscroll { display: flex; flex: 0 1 381px; height: 12px; }
.htrack { flex: 1; background: #555; }
.hthumb { width: 87%; height: 12px; background: #9d9d9d; border: 1px solid #4c4c4c; }

/* status bar */
.status { display: flex; align-items: center; flex: none; height: 17px; background: #5b5b5b; color: #f0f0f0; padding: 0 5px; }
.ready { width: 38px; }
.views { display: flex; margin-left: auto; height: 17px; }
.views button { display: flex; align-items: center; justify-content: center; width: 29px; }
.views .sel { background: #444; }
.zoom { display: flex; align-items: center; }
.zoom input { appearance: none; width: 76px; height: 10px; margin: 0 3px; background: linear-gradient(#ddd, #ddd) center / 100% 1px no-repeat; }
.zoom input::-webkit-slider-thumb { appearance: none; width: 3px; height: 9px; background: #fff; }
.pct { width: 33px; text-align: right; }

/* taskbar */
.taskbar { display: flex; flex: none; height: 30px; background: #20303c; color: #fff; }
.pins { display: grid; grid-template-columns: repeat(15, 1fr); width: 552px; }
.pins button { position: relative; display: flex; align-items: center; justify-content: center; }
.pins .run::after { content: ""; position: absolute; left: 4px; right: 4px; bottom: 0; height: 2px; background: #76b9ed; }
.pins .alert { background: #a8662f; border-bottom: 2px solid #f27a1a; }
.pins .focus { background: #4a5a66; }
.badge { font: 700 8px Roboto, sans-serif; fill: #fff; }
.tray { display: flex; align-items: center; margin-left: auto; }
.tray button { display: flex; align-items: center; justify-content: center; width: 18px; height: 30px; }
.tray .lang { width: 27px; }
.clock { display: flex; flex-direction: column; align-items: center; width: 53px; line-height: 13px; }
.tray .note { width: 29px; }
.peek { width: 4px; height: 30px; margin-left: 6px; border-left: 1px solid #66727a; }
```
